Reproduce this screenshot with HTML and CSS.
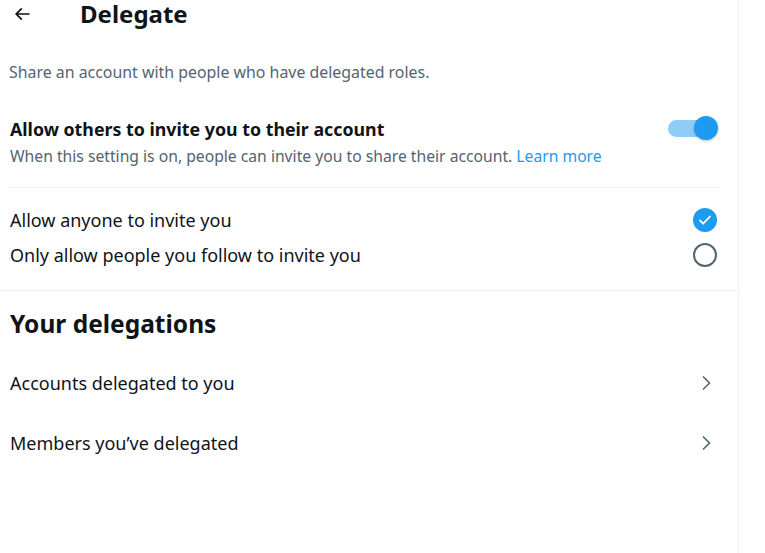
FILE: index.html
```html
<!DOCTYPE html>
<html lang="en">
<head>
<meta charset="utf-8">
<title>Delegate</title>
<link rel="stylesheet" href="styles.css">
</head>
<body>
<main class="column">
  <header class="header">
    <span class="back">
      <svg width="20" height="20" viewBox="0 0 24 24"><path d="M7.414 13l5.043 5.04-1.414 1.42L3.586 12l7.457-7.46 1.414 1.42L7.414 11H21v2H7.414z" fill="#0f1419"/></svg>
    </span>
    <h1 class="title">Delegate</h1>
  </header>

  <p class="desc">Share an account with people who have delegated roles.</p>

  <section class="setting">
    <div class="setting-text">
      <div class="setting-title">Allow others to invite you to their account</div>
      <div class="setting-sub">When this setting is on, people can invite you to share their account. <a class="link" href="#">Learn more</a></div>
    </div>
    <div class="toggle"><span class="knob"></span></div>
  </section>

  <div class="divider inset"></div>

  <section class="radios">
    <div class="radio-row">
      <span>Allow anyone to invite you</span>
      <span class="radio checked">
        <svg width="16" height="16" viewBox="0 0 16 16"><path d="M3 8.5l3.2 3.2L13 4.5" fill="none" stroke="#fff" stroke-width="1.8" stroke-linecap="round" stroke-linejoin="round"/></svg>
      </span>
    </div>
    <div class="radio-row">
      <span>Only allow people you follow to invite you</span>
      <span class="radio"></span>
    </div>
  </section>

  <div class="divider"></div>

  <h2 class="section-title">Your delegations</h2>

  <nav class="links">
    <a class="link-row" href="#">
      <span>Accounts delegated to you</span>
      <svg width="20" height="20" viewBox="0 0 20 20"><path d="M7 3.5l6.5 6.5L7 16.5" fill="none" stroke="#536471" stroke-width="1.6"/></svg>
    </a>
    <a class="link-row" href="#">
      <span>Members you’ve delegated</span>
      <svg width="20" height="20" viewBox="0 0 20 20"><path d="M7 3.5l6.5 6.5L7 16.5" fill="none" stroke="#536471" stroke-width="1.6"/></svg>
    </a>
  </nav>
</main>
</body>
</html>
```

FILE: styles.css
```css
* { box-sizing: border-box; }
html, body { margin: 0; padding: 0; background: #fff; }
body {
  font-family: "Noto Sans", "Open Sans", sans-serif;
  color: #0f1419;
  width: 765px;
  height: 553px;
  overflow: hidden;
}
.column {
  width: 739px;
  height: 553px;
  border-right: 1px solid #eff3f4;
}
.header {
  height: 28px;
  display: flex;
  align-items: center;
}
.back {
  width: 80px;
  padding-left: 12px;
  display: flex;
  align-items: center;
}
.title {
  margin: 0;
  font-size: 24px;
  font-weight: 700;
  line-height: 28px;
}
.desc {
  margin: 34px 0 0 9px;
  font-size: 15.9px;
  line-height: 20px;
  color: #536471;
}
.setting {
  margin-top: 35px;
  padding: 0 20px 21px 10px;
  display: flex;
  justify-content: space-between;
  align-items: flex-start;
}
.setting-title {
  font-size: 17.8px;
  font-weight: 700;
  line-height: 24px;
}
.setting-sub {
  margin-top: 5px;
  font-size: 15.7px;
  line-height: 20px;
  color: #536471;
}
.link { color: #1d9bf0; text-decoration: none; }
.toggle {
  position: relative;
  width: 48px;
  height: 17px;
  margin-top: 3px;
  border-radius: 9px;
  background: #8ecdf8;
  margin-right: 2px;
}
.knob {
  position: absolute;
  right: -2px;
  top: -4px;
  width: 24px;
  height: 24px;
  border-radius: 50%;
  background: #1d9bf0;
  box-shadow: 0 1px 3px rgba(0,0,0,0.25);
}
.divider {
  height: 1px;
  background: #eff3f4;
}
.divider.inset { margin: 0 18px 0 10px; }
.radios {
  padding: 14px 0 18px 10px;
}
.radio-row {
  height: 35px;
  display: flex;
  align-items: center;
  justify-content: space-between;
  padding-right: 21px;
  font-size: 18px;
}
.radio {
  width: 24px;
  height: 24px;
  border-radius: 50%;
  border: 2px solid #536471;
  display: flex;
  align-items: center;
  justify-content: center;
}
.radio.checked {
  background: #1d9bf0;
  border-color: #1d9bf0;
}
.section-title {
  margin: 17px 0 0 10px;
  font-size: 24.5px;
  font-weight: 700;
  line-height: 32px;
}
.links { margin-top: 13px; }
.link-row {
  height: 60px;
  display: flex;
  align-items: center;
  justify-content: space-between;
  padding: 0 22px 0 10px;
  font-size: 18px;
  color: #0f1419;
  text-decoration: none;
}
```
